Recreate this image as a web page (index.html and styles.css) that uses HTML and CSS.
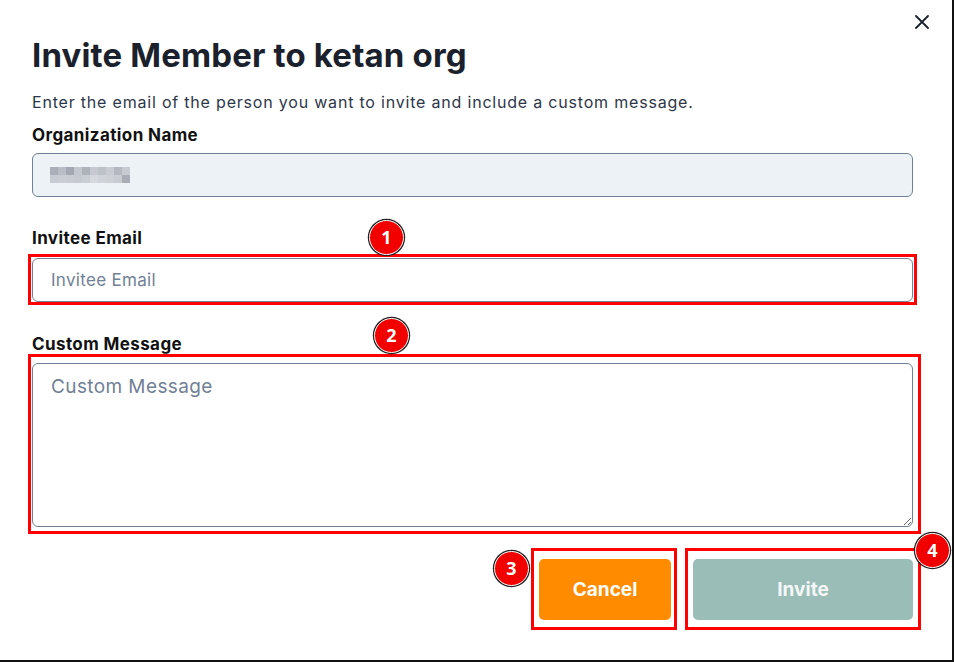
FILE: index.html
```html
<!DOCTYPE html>
<html lang="en">
<head>
<meta charset="utf-8">
<title>Invite Member</title>
<link rel="stylesheet" href="styles.css">
</head>
<body>
<div class="screen">
  <div class="dialog">
    <button class="close" aria-label="Close">
      <svg width="14" height="14" viewBox="0 0 14 14"><path d="M1 1 L13 13 M13 1 L1 13" stroke="#1a202c" stroke-width="1.8" stroke-linecap="round" fill="none"/></svg>
    </button>
    <h1 class="title">Invite Member to ketan org</h1>
    <p class="subtitle">Enter the email of the person you want to invite and include a custom message.</p>

    <label class="label label-org">Organization Name</label>
    <div class="org-input">
      <div class="mosaic">
        <span></span><span></span><span></span><span></span><span></span><span></span><span></span><span></span><span></span><span></span>
        <span></span><span></span><span></span><span></span><span></span><span></span><span></span><span></span><span></span><span></span>
      </div>
    </div>

    <label class="label label-email">Invitee Email</label>
    <div class="wrap">
      <input class="input" type="email" placeholder="Invitee Email">
      <span class="anno anno-email"></span>
      <span class="badge badge-1">1</span>
    </div>

    <label class="label label-msg">Custom Message</label>
    <div class="wrap">
      <textarea class="textarea" placeholder="Custom Message"></textarea>
      <span class="anno anno-msg"></span>
      <span class="badge badge-2">2</span>
    </div>

    <div class="actions">
      <div class="wrap">
        <button class="btn btn-cancel">Cancel</button>
        <span class="anno anno-cancel"></span>
        <span class="badge badge-3">3</span>
      </div>
      <div class="wrap">
        <button class="btn btn-invite">Invite</button>
        <span class="anno anno-invite"></span>
        <span class="badge badge-4">4</span>
      </div>
    </div>
  </div>
</div>
</body>
</html>
```

FILE: styles.css
```css
html, body {
  margin: 0;
  padding: 0;
  background: #111;
}

.screen {
  width: 952px;
  height: 660px;
  background: #fff;
  overflow: hidden;
}

.dialog {
  position: relative;
  padding: 35px 39px 0 32px;
  font-family: Inter, "Noto Sans", sans-serif;
  font-optical-sizing: none;
  font-variation-settings: "opsz" 14;
}

.close {
  position: absolute;
  top: 14px;
  left: 914px;
  width: 16px;
  height: 16px;
  padding: 1px;
  border: 0;
  background: transparent;
  display: flex;
  align-items: center;
  justify-content: center;
}

.title {
  margin: 0;
  font-size: 33px;
  line-height: 40px;
  font-weight: 700;
  color: #1a202c;
  letter-spacing: 0.15px;
}

.subtitle {
  margin: 15px 0 0;
  font-size: 16px;
  line-height: 24px;
  color: #2d3748;
  letter-spacing: 0.8px;
}

.label {
  display: block;
  font-size: 17px;
  line-height: 24px;
  font-weight: 700;
  color: #111;
  letter-spacing: 0.4px;
}

.label-org { margin-top: 9px; }
.label-email { margin-top: 29px; }
.label-msg { margin-top: 30px; }

.org-input {
  margin-top: 6px;
  height: 44px;
  box-sizing: border-box;
  border: 1px solid #718096;
  border-radius: 6px;
  background: #edf2f7;
  display: flex;
  align-items: center;
  padding-left: 17px;
}

.mosaic {
  display: grid;
  grid-template-columns: repeat(10, 8px);
  grid-template-rows: 8px 8px;
}

.mosaic span:nth-child(1) { background: #a9aeb8; }
.mosaic span:nth-child(2) { background: #b9bdc5; }
.mosaic span:nth-child(3) { background: #a3a8b2; }
.mosaic span:nth-child(4) { background: #c3c7ce; }
.mosaic span:nth-child(5) { background: #aeb3bb; }
.mosaic span:nth-child(6) { background: #c6cad0; }
.mosaic span:nth-child(7) { background: #bdc1c8; }
.mosaic span:nth-child(8) { background: #c8ccd2; }
.mosaic span:nth-child(9) { background: #b4b8c0; }
.mosaic span:nth-child(10) { background: #c7cbd1; }
.mosaic span:nth-child(11) { background: #c7cbd2; }
.mosaic span:nth-child(12) { background: #cacdd4; }
.mosaic span:nth-child(13) { background: #c9cdd3; }
.mosaic span:nth-child(14) { background: #c5c9d0; }
.mosaic span:nth-child(15) { background: #cacdd3; }
.mosaic span:nth-child(16) { background: #d5d8dd; }
.mosaic span:nth-child(17) { background: #d0d3d9; }
.mosaic span:nth-child(18) { background: #cdd1d6; }
.mosaic span:nth-child(19) { background: #c9ccd3; }
.mosaic span:nth-child(20) { background: #a9adb6; }

.wrap {
  position: relative;
}

.label + .wrap {
  margin-top: 8px;
}

.label-msg + .wrap {
  margin-top: 7px;
}

.input,
.textarea {
  display: block;
  width: 100%;
  box-sizing: border-box;
  border: 1px solid #718096;
  border-radius: 6px;
  background: #fff;
  font-family: Inter, "Noto Sans", sans-serif;
  font-optical-sizing: none;
  font-variation-settings: "opsz" 14;
  color: #1a202c;
  margin: 0;
  outline: none;
}

.input {
  height: 44px;
  padding: 0 18px;
  font-size: 17px;
  letter-spacing: 0.3px;
}

.textarea {
  height: 164px;
  padding: 10px 18px;
  font-size: 19px;
  line-height: 26px;
  letter-spacing: 0.4px;
  resize: vertical;
}

.input::placeholder,
.textarea::placeholder {
  color: #718096;
  opacity: 1;
}

.anno {
  position: absolute;
  border: 3px solid #ff0000;
  pointer-events: none;
}

.anno-email { top: -4px; bottom: -3px; left: -4px; right: -4px; }
.anno-msg { top: -9px; bottom: -7px; left: -4px; right: -8px; }
.anno-cancel { top: -11px; bottom: -10px; left: -8px; right: -6px; }
.anno-invite { top: -11px; bottom: -10px; left: -8px; right: -8px; }

.badge {
  position: absolute;
  width: 35px;
  height: 35px;
  box-sizing: border-box;
  border-radius: 50%;
  background: #f20000;
  border: 1.5px solid #fff;
  box-shadow: 0 0 0 1.2px #222;
  color: #fff;
  font-family: "Open Sans", Inter, sans-serif;
  font-weight: 700;
  font-size: 18px;
  line-height: 32px;
  text-align: center;
  z-index: 2;
}

.badge-1 { top: -38px; left: 337px; }
.badge-2 { top: -45px; left: 342px; }
.badge-3 { top: -8px; left: -45px; }
.badge-4 { top: -26px; left: 222px; }

.actions {
  display: flex;
  justify-content: flex-end;
  gap: 22px;
  margin-top: 32px;
}

.btn {
  display: block;
  height: 61px;
  border: 0;
  border-radius: 5px;
  color: #fff;
  font-family: Inter, "Noto Sans", sans-serif;
  font-optical-sizing: none;
  font-variation-settings: "opsz" 14;
  font-size: 19px;
  font-weight: 700;
  padding: 0;
}

.btn-cancel {
  width: 132px;
  background: #ff8c00;
}

.btn-invite {
  width: 220px;
  background: #9bbdb7;
  color: #f4f7f7;
}
```
